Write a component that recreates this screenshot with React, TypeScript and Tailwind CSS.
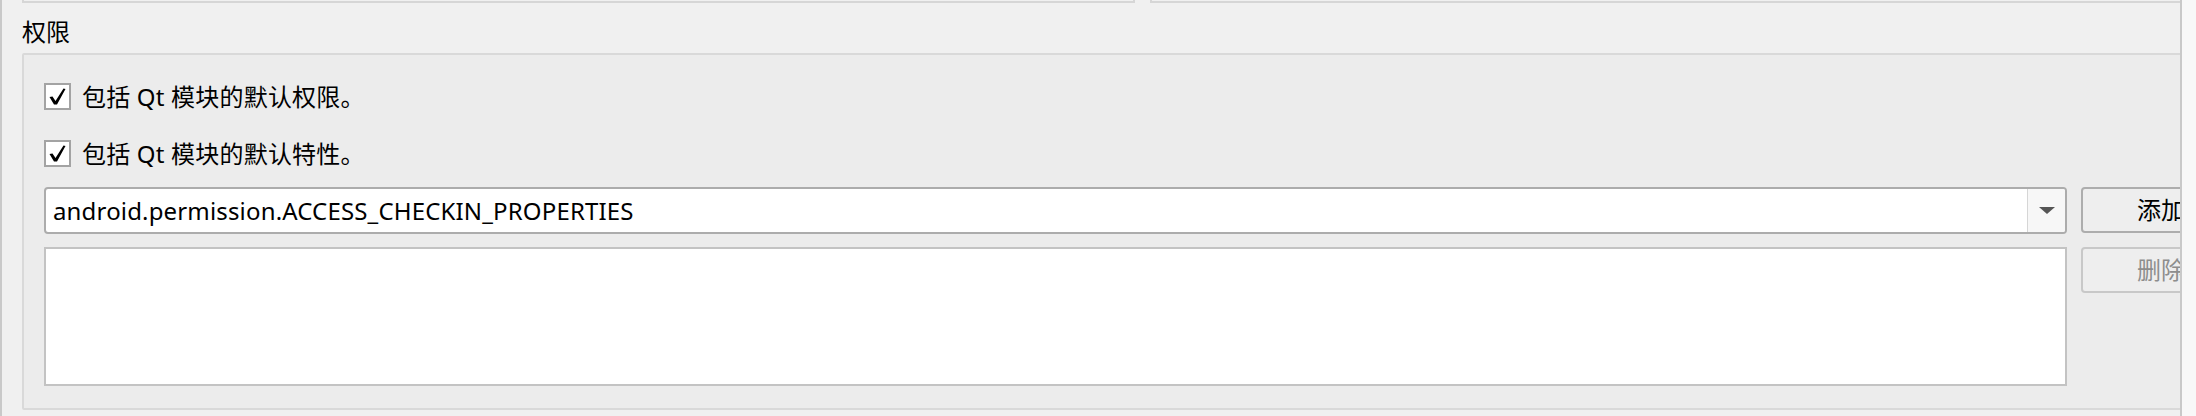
import { useState } from "react";

const font = {
  fontFamily: '"Noto Sans", "Noto Sans CJK SC", sans-serif',
};

function CheckRow({ label }: { label: string }) {
  const [checked, setChecked] = useState(true);
  return (
    <label className="flex h-[27px] cursor-default items-center gap-[11px]">
      <button
        type="button"
        onClick={() => setChecked(!checked)}
        className="flex h-[27px] w-[27px] items-center justify-center border-2 border-[#a3a3a3] bg-white"
      >
        {checked && (
          <svg width="19" height="19" viewBox="0 0 19 19">
            <path d="M1.5 10 L4.5 9.5 L7.5 14 L15.5 1.5 L17.5 2 L9 17.5 L6 17.5 Z" fill="#000" />
          </svg>
        )}
      </button>
      <span className="text-[24px] leading-[32px] tracking-[0.2px] text-black">{label}</span>
    </label>
  );
}

export default function App() {
  return (
    <div className="flex h-[416px] w-[2196px] bg-[#f0f0f0]" style={font}>
      <div className="h-full w-[2182px] overflow-hidden border-x-2 border-[#c9c9c9]">
        <div className="w-[2300px] pl-[20px]">
          {/* bottoms of the group boxes above */}
          <div className="flex h-[3px] gap-[15px]">
            <div className="w-[1113px] border-x-2 border-b-2 border-[#d6d6d6]" />
            <div className="w-[1150px] border-x-2 border-b-2 border-[#d6d6d6]" />
          </div>

          <div className="pt-[13px] pb-[5px] text-[24px] leading-[32px] text-black">权限</div>

          <section className="h-[357px] rounded-[2px] border-2 border-[#d9d9d9] bg-[#ececec] pl-[20px] pt-[28px]">
            <div className="flex flex-col gap-[30px]">
              <CheckRow label="包括 Qt 模块的默认权限。" />
              <CheckRow label="包括 Qt 模块的默认特性。" />
            </div>

            <div className="mt-[20px] grid grid-cols-[2023px_160px] gap-x-[14px] gap-y-[13px]">
              <div className="flex h-[47px] items-stretch overflow-hidden rounded-[4px] border-2 border-[#acacac] bg-white">
                <div className="flex flex-1 items-center pl-[7px] text-[24px] leading-[32px] tracking-[0.16px] text-black">
                  android.permission.ACCESS_CHECKIN_PROPERTIES
                </div>
                <div className="flex w-[38px] items-center justify-center border-l border-[#d6d6d6] bg-[#f7f7f7]">
                  <svg width="16" height="7" viewBox="0 0 16 7">
                    <path d="M0 0 H16 L8 7 Z" fill="#555" />
                  </svg>
                </div>
              </div>
              <button
                type="button"
                className="h-[46px] rounded-[4px] border-2 border-[#adadad] bg-[#eeeeee] text-[24px] leading-[32px] text-black"
              >
                添加
              </button>

              <div className="h-[139px] border-2 border-[#c3c3c3] bg-white" />
              <button
                type="button"
                disabled
                className="h-[46px] self-start rounded-[4px] border-2 border-[#c8c8c8] bg-[#eeeeee] text-[24px] leading-[32px] text-[#8d8d8d]"
              >
                删除
              </button>
            </div>
          </section>
        </div>
      </div>
      <div className="h-full flex-1 bg-[#f8f8f8]" />
    </div>
  );
}
